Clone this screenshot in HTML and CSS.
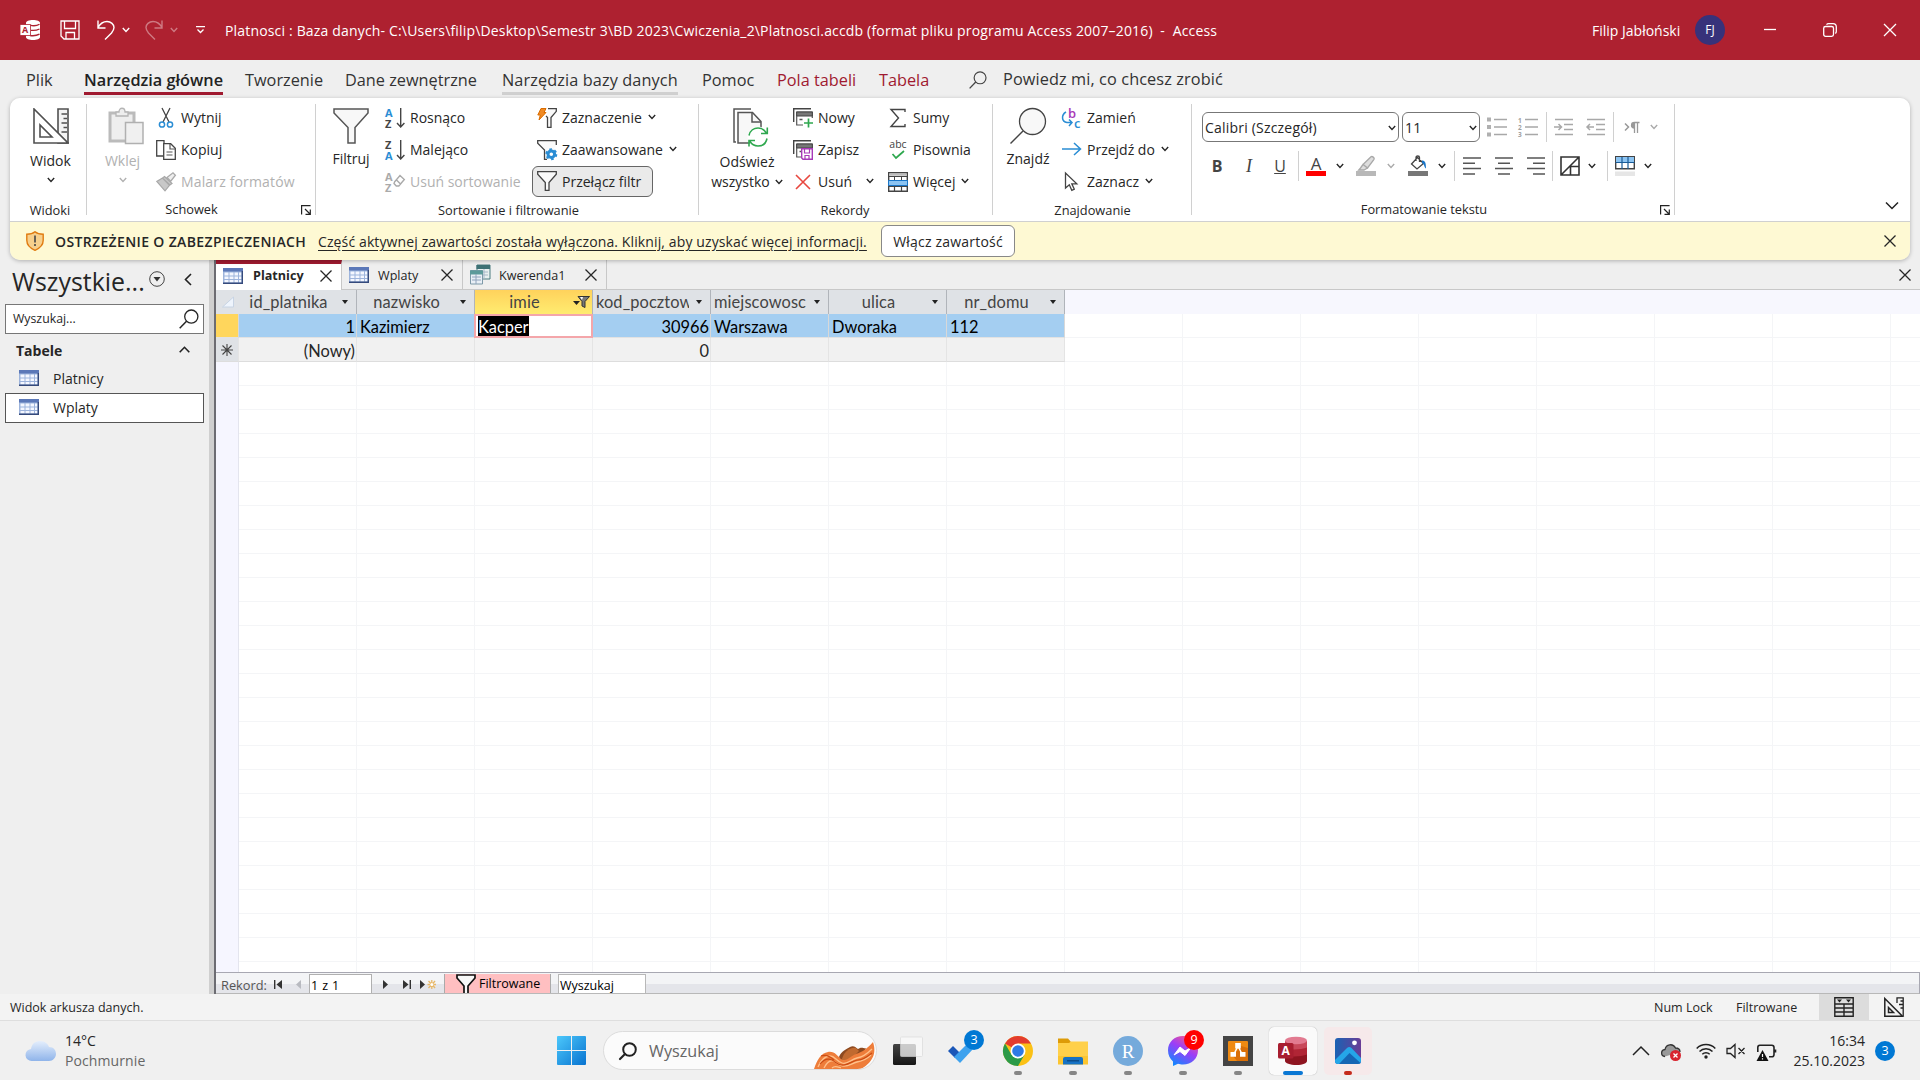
FILE: index.html
```html
<!DOCTYPE html>
<html lang="pl">
<head>
<meta charset="utf-8">
<title>Platnosci - Access</title>
<link rel="stylesheet" href="styles.css">
</head>
<body>
<svg class="defs" aria-hidden="true">
  <symbol id="chev" viewBox="0 0 8 6"><path d="M.8 1 4 4.400 7.200 1" fill="none" stroke="currentColor" stroke-width="1.400"/></symbol>
  <symbol id="x" viewBox="0 0 12 12"><path d="M.500.500l11 11M11.500.500l-11 11" fill="none" stroke="currentColor" stroke-width="1.300"/></symbol>
  <symbol id="mag" viewBox="0 0 20 20"><path d="M.700 19.300 7.500 12.300" fill="none" stroke="currentColor" stroke-width="1.500"/><circle cx="12.300" cy="7.600" r="6.600" fill="none" stroke="currentColor" stroke-width="1.300"/></symbol>
  <symbol id="funnel" viewBox="0 0 36 36"><path d="M1 1h34v4L22 19.500V35h-7V19.500L1 5z" fill="#f8f8f8" stroke="#555" stroke-width="1.500"/></symbol>
  <symbol id="funnel-s" viewBox="0 0 20 20"><path d="M.700.700h18.600v2.600L12 11.500v7.800H8.300v-7.800L.700 3.300z" fill="#fafafa" stroke="#444" stroke-width="1.300"/></symbol>
  <symbol id="sheet" viewBox="0 0 20 16"><path d="M0 0h20v16H0z" fill="#9db4dc"/><path d="M0 0h20v3.500H0z" fill="#5b78b8"/><path d="M1.500 4.500h4v3h-4zM6.500 4.500h4v3h-4zM11.500 4.500h3.500v3h-3.500zM16 4.500h2.500v3H16zM1.500 8.500h4v2.500h-4zM6.500 8.500h4v2.500h-4zM11.500 8.500h3.500v2.500h-3.500zM16 8.500h2.500v2.500H16zM1.500 12h4v2.500h-4zM6.500 12h4v2.500h-4zM11.500 12h3.500v2.500h-3.500zM16 12h2.500v2.500H16z" fill="#f4f7ff"/><path d="M0 15.300h19.300V3" fill="none" stroke="#354a7c" stroke-width="1.400"/></symbol>
  <symbol id="ruler" viewBox="0 0 36 36"><path d="M25 1h10v34H25z" fill="#f4f4f4" stroke="#505050" stroke-width="1.600"/><path d="M28.500 6H34M30.500 10.500H34M28.500 15H34M30.500 19.500H34M28.500 24H34" stroke="#505050" stroke-width="1.300"/><path d="M1 1v34h34z" fill="#fff" stroke="#505050" stroke-width="1.600"/><path d="M7 17v12h12z" fill="#fff" stroke="#505050" stroke-width="1.600"/></symbol>
  <symbol id="launch" viewBox="0 0 10 10"><path d="M.600 9.500V.600h9M4 4l5 5M9.300 4.500v4.800H4.500" fill="none" stroke="#222" stroke-width="1.200"/></symbol>
  <symbol id="rec" viewBox="0 0 20 20"><path d="M.700 14V.700H18" fill="none" stroke="#444" stroke-width="1.400"/><path d="M3.700 17V4h15.600v13z" fill="#fff" stroke="#555" stroke-width="1.200"/><path d="M3.700 4h15.600v4H3.700z" fill="#777" stroke="#444"/><path d="M6.500 11.500h3M11.500 11.500h3" stroke="#555" stroke-width="1.400"/></symbol>
  <symbol id="arr-down" viewBox="0 0 9 20"><path d="M4.700 0v19M1 15l3.700 4 3.700-4" fill="none" stroke="#444" stroke-width="1.400"/></symbol>
</svg>

<header class="titlebar">
  <svg class="i20" viewBox="0 0 20 20"><path d="M6 3c0-1.800 3-3 7-3s7 1.200 7 3v14c0 1.800-3 3-7 3s-7-1.200-7-3z" fill="#fff"/><path d="M10 5.200c3 .8 7 .5 9.500-1M11 10.300c3 .4 6 0 8.500-1.300M10 15.500c4 .6 7 0 9.500-1.300" fill="none" stroke="#ae2130" stroke-width="1.300"/><path d="M0 4.500h10.500v11H0z" fill="#fff" stroke="#ae2130" stroke-width=".8"/><text x="5.200" y="13.400" class="ic-a" fill="#ae2130" text-anchor="middle">A</text></svg>
  <svg class="i20" viewBox="0 0 20 20"><path d="M1 1h18v18H4l-3-3zM4.500 1v7.500h11V1M6 19v-6.500h8.500V19" fill="none" stroke="#fff" stroke-width="1.300"/></svg>
  <svg class="i20" viewBox="0 0 20 20"><path d="M2 .500V8h7.500M2 7.500C4 4 7 1.500 11 1.500c4 0 7 3 7 6 0 2-1 3.500-2.500 5.500L9 19.500" fill="none" stroke="#fff" stroke-width="1.400"/></svg>
  <svg class="chev"><use href="#chev"/></svg>
  <svg class="i20 faded" viewBox="0 0 20 20"><path d="M18 .500V8h-7.500M18 7.500C16 4 13 1.500 9 1.500c-4 0-7 3-7 6 0 2 1 3.500 2.500 5.500L11 19.500" fill="none" stroke="#fff" stroke-width="1.400"/></svg>
  <svg class="chev faded"><use href="#chev"/></svg>
  <svg class="custom" viewBox="0 0 9 8"><path d="M0 .700h9M1.500 3.500l3 3 3-3" fill="none" stroke="#fff" stroke-width="1.300"/></svg>
  <span class="title">Platnosci : Baza danych- C:\Users\filip\Desktop\Semestr 3\BD 2023\Cwiczenia_2\Platnosci.accdb (format pliku programu Access 2007–2016)&nbsp; -&nbsp; Access</span>
  <span class="user">Filip Jabłoński</span>
  <span class="avatar">FJ</span>
  <svg class="win" viewBox="0 0 14 14"><path d="M0 6.500h12" stroke="#fff" stroke-width="1.300"/></svg>
  <svg class="win" viewBox="0 0 14 14"><rect x=".700" y="3.500" width="9.800" height="9.800" rx="1.800" fill="none" stroke="#fff" stroke-width="1.300"/><path d="M3.500 1.600C4 1 4.500.700 5.500.700h4.500a3.300 3.300 0 0 1 3.300 3.300v4.500c0 .8-.3 1.500-1 2" fill="none" stroke="#fff" stroke-width="1.300"/></svg>
  <svg class="win" viewBox="0 0 14 14"><path d="M1 1l12 12M13 1 1 13" stroke="#fff" stroke-width="1.300"/></svg>
</header>

<nav class="tabs">
  <span>Plik</span><span class="on">Narzędzia główne</span><span>Tworzenie</span><span>Dane zewnętrzne</span><span class="hover">Narzędzia bazy danych</span><span>Pomoc</span><span class="ctx">Pola tabeli</span><span class="ctx">Tabela</span>
  <svg class="tellicon"><use href="#mag"/></svg><span class="tell">Powiedz mi, co chcesz zrobić</span>
</nav>

<section class="ribbonbox">
<div class="ribbon">
  <div class="group g-views">
    <div class="body"><div class="big"><svg class="i36"><use href="#ruler"/></svg><span>Widok</span><svg class="chev"><use href="#chev"/></svg></div></div>
    <div class="label">Widoki</div>
  </div>

  <div class="group g-clip">
    <div class="body">
      <div class="big dis"><svg class="i36" viewBox="0 0 36 36"><path d="M2 5h24v28H2z" fill="#eee" stroke="#bbb" stroke-width="3"/><path d="M8 8V4h3c0-5 6-5 6 0h3v4z" fill="#eee" stroke="#b5b5b5" stroke-width="1.300"/><path d="M17.500 14.500H35v21H17.500z" fill="#f0f0f0" stroke="#b0b0b0" stroke-width="1.500"/></svg><span>Wklej</span><svg class="chev"><use href="#chev"/></svg></div>
      <div class="col">
        <div class="cmd"><svg class="i20" viewBox="0 0 20 20"><path d="M6 0l7 14M14 0 7 14" stroke="#444" stroke-width="1.300"/><circle cx="6" cy="16.500" r="2.600" fill="none" stroke="#2a8dd4" stroke-width="1.500"/><circle cx="14" cy="16.500" r="2.600" fill="none" stroke="#2a8dd4" stroke-width="1.500"/></svg><span>Wytnij</span></div>
        <div class="cmd"><svg class="i20" viewBox="0 0 20 20"><path d="M8 3V.700H.700V16H7" fill="none" stroke="#444" stroke-width="1.300"/><path d="M7.700 3.700h7l4.600 4.600v11H7.700z" fill="#fff" stroke="#444" stroke-width="1.300"/><path d="M14 4v5h5M10.500 12h6M10.500 15h6" fill="none" stroke="#555" stroke-width="1.200"/></svg><span>Kopiuj</span></div>
        <div class="cmd dis"><svg class="i20" viewBox="0 0 20 20"><path d="M11 5.500 17 .800l2.400 2.400-4.700 6z" fill="#eee" stroke="#aaa" stroke-width="1.300"/><path d="M8.500 4.500l7.500 7-2 1.500-7.500-7zM6.500 6 .800 9.500 9 18.800l4.500-5.500z" fill="#c8c8c8" stroke="#a8a8a8" stroke-width="1.200"/></svg><span class="wide">Malarz formatów</span></div>
      </div>
    </div>
    <div class="label">Schowek</div><svg class="launch"><use href="#launch"/></svg>
  </div>

  <div class="group g-sort">
    <div class="body">
      <div class="big up"><svg class="i36"><use href="#funnel"/></svg><span>Filtruj</span></div>
      <div class="col c1">
        <div class="cmd"><svg class="i20" viewBox="0 0 20 20"><text x="0" y="8.500" class="az" fill="#2a8dd4">A</text><text x="0" y="19.500" class="az" fill="#444">Z</text><use href="#arr-down" x="11" width="9" height="20"/></svg><span>Rosnąco</span></div>
        <div class="cmd"><svg class="i20" viewBox="0 0 20 20"><text x="0" y="8.500" class="az" fill="#444">Z</text><text x="0" y="19.500" class="az" fill="#2a8dd4">A</text><use href="#arr-down" x="11" width="9" height="20"/></svg><span>Malejąco</span></div>
        <div class="cmd dis"><svg class="i20" viewBox="0 0 20 20"><text x="0" y="8.500" class="az" fill="#aaa">A</text><text x="0" y="19.500" class="az" fill="#aaa">Z</text><path d="M9.500 10 15 3.500l4.300 4L13.800 14h-2.500L9 11.500zM11.500 8l4 4" fill="none" stroke="#aaa" stroke-width="1.400"/></svg><span>Usuń sortowanie</span></div>
      </div>
      <div class="col c2">
        <div class="cmd"><svg class="i20" viewBox="0 0 20 20"><path d="M11 .700h8.300v2.600L14 9.500v9.800h-3.500V9.500L9 8" fill="#fafafa" stroke="#444" stroke-width="1.300"/><path d="M4 .500h5L7 4.500h2L2 12l1.300-5H.800z" fill="#f08a24" stroke="#d96c00"/></svg><span>Zaznaczenie</span><svg class="chev"><use href="#chev"/></svg></div>
        <div class="cmd"><svg class="i20" viewBox="0 0 20 20"><path d="M19.300 5V.700H.700v2.600L7.500 10v9.300H10" fill="#fafafa" stroke="#444" stroke-width="1.300"/><circle cx="14.300" cy="14.200" r="3.300" fill="#fff" stroke="#2a8dd4" stroke-width="3"/><circle cx="14.300" cy="14.200" r="5" fill="none" stroke="#2a8dd4" stroke-width="2" stroke-dasharray="2.600 2.636"/></svg><span>Zaawansowane</span><svg class="chev"><use href="#chev"/></svg></div>
        <div class="cmd toggled"><svg class="i20"><use href="#funnel-s"/></svg><span>Przełącz filtr</span></div>
      </div>
    </div>
    <div class="label">Sortowanie i filtrowanie</div>
  </div>

  <div class="group g-rec">
    <div class="body">
      <div class="big refresh"><svg viewBox="0 0 36 39"><path d="M18 1H1v33h2" fill="none" stroke="#555" stroke-width="1.500"/><path d="M5 4.500h14.500l8.500 9V35H5z" fill="#f8f8f8" stroke="#555" stroke-width="1.500"/><path d="M19 5v9h9" fill="none" stroke="#555" stroke-width="1.500"/><circle cx="25" cy="29" r="10.500" fill="#fff"/><path d="M16 27.500c1-5 5-7.500 9-7.500 3.500 0 6.500 2 8.300 5M34.300 19.500v6H28M34 30.500c-1 5-4.500 7.500-9 7.500-3.500 0-6.500-2-8.300-5M16 38.500v-6h6" fill="none" stroke="#2fa84f" stroke-width="1.600"/></svg><span>Odśwież</span><span class="l2">wszystko <svg class="chev"><use href="#chev"/></svg></span></div>
      <div class="col c1">
        <div class="cmd"><svg class="i20" viewBox="0 0 20 20"><use href="#rec" width="20" height="20"/><path d="M10 10h10v10H10z" fill="#fff"/><path d="M15.500 10.500v9M11 15h9" stroke="#2fa84f" stroke-width="1.700"/></svg><span>Nowy</span></div>
        <div class="cmd"><svg class="i20" viewBox="0 0 20 20"><use href="#rec" width="20" height="20"/><path d="M8.700 8.700h10.600v10.600H10L8.700 18z" fill="#fff" stroke="#a839b8" stroke-width="1.400"/><path d="M11.500 9v4h5V9M12 19v-3.500h4V19" fill="none" stroke="#a839b8" stroke-width="1.200"/></svg><span>Zapisz</span></div>
        <div class="cmd"><svg class="i20" viewBox="0 0 20 20"><path d="M3 3l14 14M17 3 3 17" stroke="#e8483f" stroke-width="1.600"/></svg><span>Usuń</span><svg class="chev far"><use href="#chev"/></svg></div>
      </div>
      <div class="col c2">
        <div class="cmd"><svg class="i20" viewBox="0 0 20 20"><path d="M17 4V1.500H3l7.500 8.500L3 18.500h14V16" fill="none" stroke="#444" stroke-width="1.400"/></svg><span>Sumy</span></div>
        <div class="cmd"><svg class="i20" viewBox="0 0 20 20"><text x="10" y="8" class="abc" text-anchor="middle" fill="#444">abc</text><path d="M4.500 14l3.500 4 8-7" fill="none" stroke="#2fa84f" stroke-width="1.700"/></svg><span>Pisownia</span></div>
        <div class="cmd"><svg class="i20" viewBox="0 0 20 20"><path d="M.700.700h18.600v18.600H.700z" fill="#fff" stroke="#444" stroke-width="1.400"/><path d="M1.300 1.300h17.400v2.500H1.300z" fill="#bbb"/><path d="M0 4.500h20M0 14.500h20M6.500 14v6M13.500 14v6" stroke="#444" stroke-width="1.200"/><path d="M.500 8.500h19v5H.500z" fill="#8cc4f2" stroke="#1a76c8"/><path d="M6.500 4.500V8M13.500 4.500V8" stroke="#444"/></svg><span>Więcej</span><svg class="chev"><use href="#chev"/></svg></div>
      </div>
    </div>
    <div class="label">Rekordy</div>
  </div>

  <div class="group g-find">
    <div class="body">
      <div class="big up"><svg class="i36" viewBox="0 0 36 36"><path d="M.500 35.500 13 23" stroke="#444" stroke-width="1.500"/><circle cx="22.500" cy="13.500" r="13" fill="#f8f8f8" stroke="#444" stroke-width="1.300"/></svg><span>Znajdź</span></div>
      <div class="col">
        <div class="cmd"><svg class="i20" viewBox="0 0 20 20"><text x="6" y="9.500" class="bc" fill="#a839b8">b</text><text x="12" y="19.500" class="bc" fill="#2a8dd4">c</text><path d="M4 4C-1 7-.500 14 5 14.500h5M7 11.500l3 3-3 3.500" fill="none" stroke="#2a8dd4" stroke-width="1.500"/></svg><span>Zamień</span></div>
        <div class="cmd"><svg class="i20" viewBox="0 0 20 20"><path d="M0 9h18M12 3l6.500 6-6.500 6" fill="none" stroke="#2a8dd4" stroke-width="1.500"/></svg><span>Przejdź do</span><svg class="chev"><use href="#chev"/></svg></div>
        <div class="cmd"><svg class="i20" viewBox="0 0 20 20"><path d="M3.500 1v15l3.800-3.300 2.500 5.600 2.500-1.200-2.500-5.300h5z" fill="#fff" stroke="#444" stroke-width="1.300"/></svg><span>Zaznacz</span><svg class="chev"><use href="#chev"/></svg></div>
      </div>
    </div>
    <div class="label">Znajdowanie</div>
  </div>

  <div class="group g-fmt">
    <div class="fmt">
      <div class="frow r1">
        <span class="combo">Calibri (Szczegół)<svg class="chev"><use href="#chev"/></svg></span>
        <span class="combo c11">11<svg class="chev"><use href="#chev"/></svg></span>
        <svg class="i20" viewBox="0 0 20 20"><path d="M0 .500h4v4H0zM0 8h4v4H0zM0 15.500h4v4H0z" fill="#b0b0b0"/><path d="M7 2.500h13M7 10h13M7 17.500h13" stroke="#a8a8a8" stroke-width="1.500"/></svg>
        <svg class="i20" viewBox="0 0 20 20"><g class="nums" fill="#a0a0a0"><text x="0" y="5.500">1</text><text x="0" y="12.800">2</text><text x="0" y="19.800">3</text></g><path d="M7 2.500h13M7 10h13M7 17.500h13" stroke="#a8a8a8" stroke-width="1.500"/></svg>
        <i class="sep"></i>
        <svg class="i20" viewBox="0 0 20 20"><path d="M1 2.500h18M10 7.500h9M10 12.500h9M1 17.500h18M0 10h7M4.500 7l3 3-3 3" fill="none" stroke="#a8a8a8" stroke-width="1.500"/></svg>
        <svg class="i20" viewBox="0 0 20 20"><path d="M1 2.500h18M10 7.500h9M10 12.500h9M1 17.500h18M1 10h7M4 7l-3 3 3 3" fill="none" stroke="#a8a8a8" stroke-width="1.500"/></svg>
        <i class="sep"></i>
        <svg class="i20" viewBox="0 0 20 20"><path d="M3 6.500l3.500 3.500L3 13.500" fill="none" stroke="#999" stroke-width="1.500"/><path d="M17.500 5.500h-5c-4 0-4 5.500 0 5.500M12.500 5.500V16M15.500 5.500V16" fill="none" stroke="#999" stroke-width="1.300"/><path d="M12.500 5.500c-4 0-4 5.500 0 5.500z" fill="#999"/></svg>
        <svg class="chev pale"><use href="#chev"/></svg>
      </div>
      <div class="frow r2">
        <b>B</b><em>I</em><u>U</u><i class="sep"></i>
        <svg class="i20" viewBox="0 0 20 20"><text x="10" y="13.500" class="fa" text-anchor="middle" fill="#444">A</text><path d="M0 15h20v5H0z" fill="red"/></svg>
        <svg class="chev"><use href="#chev"/></svg>
        <svg class="i20" viewBox="0 0 20 20"><path d="M7 8.500 15 .800c1-1 4 1 3 2.500L11.500 12zM7 8.500 4.500 12l-1.800 2H8l3.500-2z" fill="#ddd" stroke="#a8a8a8" stroke-width="1.300"/><path d="M0 15h20v5H0z" fill="#b8b8b8"/></svg>
        <svg class="chev pale"><use href="#chev"/></svg>
        <svg class="i20" viewBox="0 0 20 20"><path d="M9.500 1.500 3.500 8l5.500 5 6.500-5.500zM8 5V1.500c0-2 3.500-2 3.500 0V6" fill="#fff" stroke="#444" stroke-width="1.300"/><path d="M14 4.500c3 0 4 2 4 8-2-1-1.500-5-4-5.500z" fill="#1a76c8"/><path d="M0 15h20v5H0z" fill="#777"/></svg>
        <svg class="chev"><use href="#chev"/></svg><i class="sep"></i>
        <svg class="i20" viewBox="0 0 20 20"><path d="M1 2h18M1 7.300h12M1 12.600h18M1 18h12" stroke="#555" stroke-width="1.500"/></svg>
        <svg class="i20" viewBox="0 0 20 20"><path d="M1 2h18M4 7.300h12M1 12.600h18M4 18h12" stroke="#555" stroke-width="1.500"/></svg>
        <svg class="i20" viewBox="0 0 20 20"><path d="M1 2h18M7 7.300h12M1 12.600h18M7 18h12" stroke="#555" stroke-width="1.500"/></svg>
        <i class="sep"></i>
        <svg class="i20" viewBox="0 0 20 20"><path d="M1 1h18v18H1zM1 19 19 1M10.500 10.500V19M10.500 10.500H19" fill="none" stroke="#333" stroke-width="1.600"/></svg>
        <svg class="chev"><use href="#chev"/></svg><i class="sep"></i>
        <svg class="i20" viewBox="0 0 20 20"><path d="M.700.700h18.600v12H.700z" fill="#fff" stroke="#444" stroke-width="1.400"/><path d="M1 1h18v5.500H1z" fill="#8cc4f2"/><path d="M7 1v12M13 1v12M.500 6.500h19" stroke="#1a5c98" stroke-width="1.200"/><path d="M0 15.500h20V20H0z" fill="#e6e6e6"/></svg>
        <svg class="chev"><use href="#chev"/></svg>
      </div>
    </div>
    <div class="label">Formatowanie tekstu</div><svg class="launch"><use href="#launch"/></svg>
  </div>
  <svg class="collapse" viewBox="0 0 14 9"><path d="M1 1.500l6 6 6-6" fill="none" stroke="#222" stroke-width="1.500"/></svg>
</div>
<div class="warn">
  <svg class="shield" viewBox="0 0 18 20"><path d="M9 .700C11 2.500 14 3.300 17.200 3.300v6c0 5-3.500 8-8.200 10-4.700-2-8.200-5-8.200-10v-6C4 3.300 7 2.500 9 .700z" fill="#f7d08c" stroke="#e07b10" stroke-width="1.400"/><path d="M9 4.500v7M9 13v2" stroke="#444" stroke-width="1.600"/></svg>
  <b>OSTRZEŻENIE O ZABEZPIECZENIACH</b>
  <a>Część aktywnej zawartości została wyłączona. Kliknij, aby uzyskać więcej informacji.</a>
  <span class="enable">Włącz zawartość</span>
  <svg class="x12"><use href="#x"/></svg>
</div>
</section>

<main class="work">
  <aside class="nav">
    <div class="navhead"><span class="all">Wszystkie...</span><svg class="drop" viewBox="0 0 16 16"><circle cx="8" cy="8" r="7.300" fill="none" stroke="#444"/><path d="M4.500 6h7L8 10.500z" fill="#333"/></svg><svg class="left" viewBox="0 0 8 13"><path d="M7 1 1.500 6.500 7 12" fill="none" stroke="#222" stroke-width="1.600"/></svg></div>
    <div class="search"><span>Wyszukaj...</span><svg><use href="#mag"/></svg></div>
    <div class="sect"><b>Tabele</b><svg viewBox="0 0 11 7"><path d="M.700 6.300 5.500 1.300l4.800 5" fill="none" stroke="#222" stroke-width="1.600"/></svg></div>
    <div class="item"><svg><use href="#sheet"/></svg>Platnicy</div>
    <div class="item sel"><svg><use href="#sheet"/></svg>Wplaty</div>
  </aside>
  <section class="doc">
    <div class="doctabs">
      <div class="dt on"><svg class="sh"><use href="#sheet"/></svg><b>Platnicy</b><svg class="x12"><use href="#x"/></svg></div>
      <div class="dt t2"><svg class="sh"><use href="#sheet"/></svg><span>Wplaty</span><svg class="x12"><use href="#x"/></svg></div>
      <div class="dt t3"><svg class="q" viewBox="0 0 20 20"><path d="M7 0h13v14H7z" fill="#e8f0f0" stroke="#4d7d80"/><path d="M6.500 0H20v4H6.500z" fill="#3d7175"/><path d="M10 7h8M10 10h8M14 4v10" stroke="#a8b8c8"/><path d="M.500 5.500h12V19H.500z" fill="#e9eff6" stroke="#7d99a8"/><path d="M0 5.500h13v4H0z" fill="#5c9a9a"/><path d="M2 12h9M2 15h9M6 9v10" stroke="#90a4bc"/></svg><span>Kwerenda1</span><svg class="x12"><use href="#x"/></svg></div>
      <svg class="x12 closeall"><use href="#x"/></svg>
    </div>
    <div class="sheet">
      <div class="row head">
        <div class="sel"><svg viewBox="0 0 12 11"><path d="M11.500.500v10H.500z" fill="#eef4fc" stroke="#c8d4e4"/></svg></div>
        <div><span>id_platnika</span><i></i></div><div><span>nazwisko</span><i></i></div><div class="act"><span>imie</span><svg viewBox="0 0 17 12"><path d="M0 5h7L3.500 9z" fill="#222"/><path d="M5 .500h11.500l-4.500 5v6L9 10V5.500z" fill="#777" stroke="#333"/><path d="M7 1h3l-1 3z" fill="#fff"/></svg></div><div><span>kod_pocztowy</span><i></i></div><div><span>miejscowosc</span><i></i></div><div><span>ulica</span><i></i></div><div><span>nr_domu</span><i></i></div>
      </div>
      <div class="row data">
        <div class="sel"></div><div class="num">1</div><div>Kazimierz</div><div class="edit"><mark>Kacper</mark></div><div class="num">30966</div><div>Warszawa</div><div>Dworaka</div><div>112</div>
      </div>
      <div class="row new">
        <div class="sel"><svg viewBox="0 0 12 12"><path d="M6 0v12M0 6h12M1.500 1.500l9 9M10.500 1.500l-9 9" stroke="#444" stroke-width="1.100"/></svg></div><div class="num">(Nowy)</div><div></div><div></div><div class="num">0</div><div></div><div></div><div></div>
      </div>
    </div>
    <div class="recbar">
      <span class="rl">Rekord:</span>
      <svg viewBox="0 0 8 9"><path d="M.700 0v9" stroke="#333" stroke-width="1.400"/><path d="M8 0v9L2.500 4.500z" fill="#333"/></svg>
      <svg viewBox="0 0 8 9"><path d="M6 0v9L1 4.500z" fill="#b8bac0"/></svg>
      <span class="pos">1 z 1</span>
      <svg viewBox="0 0 8 9"><path d="M0 0v9l5-4.500z" fill="#333"/></svg>
      <svg viewBox="0 0 8 9"><path d="M0 0v9l5.500-4.500z" fill="#333"/><path d="M7.300 0v9" stroke="#333" stroke-width="1.400"/></svg>
      <svg class="nw" viewBox="0 0 16 9"><path d="M0 0v9l5-4.500z" fill="#333"/><path d="M11.800 0v9M7.500 4.500h8.500M8.500 1l6.600 7M15.100 1l-6.600 7" stroke="#e8b868" stroke-width="1.300"/><circle cx="11.800" cy="4.500" r="1.500" fill="#fff"/></svg>
      <span class="filt"><svg viewBox="0 0 20 20"><path d="M1 1h18v3l-7 8v9H8v-9L1 4z" fill="#f8f8f8" stroke="#111" stroke-width="1.700"/></svg>Filtrowane</span>
      <span class="find">Wyszukaj</span>
    </div>
  </section>
</main>

<footer class="status">
  <span class="msg">Widok arkusza danych.</span><span class="nl">Num Lock</span><span class="fl">Filtrowane</span>
  <span class="view"><svg class="i20" viewBox="0 0 20 20"><path d="M.800.800h18.400v18.400H.800zM1 7h18M1 11h18M1 15h18M10 7v12" fill="none" stroke="#222" stroke-width="1.400"/><path d="M3 2.500h5L5.500 5.500zM12 2.500h5l-2.500 3z" fill="#222"/></svg></span>
  <svg class="i20" viewBox="0 0 20 20"><path d="M13 6V.800h6.200V19M16.500 4H19M15 7.500h4M16.500 11H19" fill="none" stroke="#222" stroke-width="1.300"/><path d="M.800 1.500v17.700h17.700zM4.500 10.500v5h5z" fill="none" stroke="#222" stroke-width="1.500"/></svg>
</footer>

<footer class="taskbar">
  <svg class="weather" viewBox="0 0 32 22"><defs><linearGradient id="cl" x2="0" y2="1"><stop stop-color="#e4eefc"/><stop offset="1" stop-color="#8fb4ea"/></linearGradient></defs><path d="M7 21a6 6 0 0 1-1-12C7 3 11 1 15 1c5 0 8 3 9 6 5 0 7 3.500 7 7s-3 7-7 7z" fill="url(#cl)"/></svg>
  <div class="wtext"><span>14°C</span><span class="dim">Pochmurnie</span></div>
  <svg class="start" viewBox="0 0 29 29"><defs><linearGradient id="wn" x2="1" y2="1"><stop stop-color="#4cc8fb"/><stop offset="1" stop-color="#0873d0"/></linearGradient></defs><path d="M0 1a1 1 0 0 1 1-1h13v14H0zM15 0h13a1 1 0 0 1 1 1v13H15zM0 15h14v14H1a1 1 0 0 1-1-1zM15 15h14v13a1 1 0 0 1-1 1H15z" fill="url(#wn)"/></svg>
  <div class="pill"><svg class="pm" viewBox="0 0 18 18"><circle cx="10.500" cy="7.500" r="6.300" fill="none" stroke="#222" stroke-width="2"/><path d="M6 12 1 17" stroke="#222" stroke-width="2.200" stroke-linecap="round"/></svg><span>Wyszukaj</span>
    <svg class="art" viewBox="0 0 61 27"><path d="M25 15c2-6 8-8 11-10 4-2 6 1 8 2 4-3 6 0 8-1l-4 9-22 3z" fill="#8d4a20"/><path d="M30 12c4-5 8-7 12-6l3 3-9 9-9 1z" fill="#c06a30"/><path d="M0 27C3 18 7 11 14 10c7-1 9 4 14 8 5 1 9-4 14-6 6-2 11-5 17-12 3 9 2 19-12 27z" fill="#ee7d3a"/><path d="M4 25c3-7 7-11 12-11s6 5 12 7 9-4 15-5 10-4 15-9M10 26c3-6 6-8 9-7s5 4 10 5 9-3 14-4 9-2 14-7M18 26c3-3 6-1 9 0" fill="none" stroke="#ffc08a" stroke-width="1.300"/><path d="M6 22c4-5 8-6 12-4s6 6 12 5 10-5 14-5 9-3 14-7M7 14c5-2 9 0 13 4" fill="none" stroke="#cc4d14" stroke-width="1.200"/></svg></div>
  <div class="apps">
    <div class="app"><svg viewBox="0 0 30 30"><defs><linearGradient id="tv" x2="0" y2="1"><stop stop-color="#444"/><stop offset="1" stop-color="#161616"/></linearGradient></defs><rect x="0" y="8" width="23" height="21" rx="1.500" fill="url(#tv)"/><rect x="7.500" y="1" width="22" height="19.500" rx="1" fill="#fafafa" stroke="#ddd" opacity=".75"/></svg></div>
    <div class="app"><svg viewBox="0 0 30 30"><path d="M0 15l5-5 7 7-5 5z" fill="#1b57b8"/><path d="M6 21 20 7l6 5-14 15z" fill="#3ea2ee"/></svg><span class="badge">3</span></div>
    <div class="app run"><svg viewBox="0 0 30 30"><circle cx="15" cy="15" r="15" fill="#fbc116"/><path d="M15 15 2 7.500A15 15 0 0 1 28 7.500H15z" fill="#e33b2e"/><path d="M2 7.500A15 15 0 0 0 15 30l6.500-11.300L15 22 8.500 18.800z" fill="#2b9a48"/><circle cx="15" cy="15" r="7.500" fill="#fff"/><circle cx="15" cy="15" r="5.800" fill="#2f7ae5"/></svg></div>
    <div class="app run"><svg viewBox="0 0 30 30"><path d="M0 2.500h10l3 3.500v4H0z" fill="#dd9b08"/><path d="M0 7h11l2-1.500h17V28H0z" fill="#ffd04a"/><path d="M0 20h30v8.500H0z" fill="#fcc530"/><path d="M5 28.500V23a2 2 0 0 1 2-2h16a2 2 0 0 1 2 2v5.500z" fill="#1672c4"/><path d="M9 24.800h12" stroke="#0b447e" stroke-width="1.200"/></svg></div>
    <div class="app run"><svg viewBox="0 0 30 30"><circle cx="15" cy="15" r="15" fill="#75aadb"/><text x="15" y="21.500" class="rr" text-anchor="middle" fill="#fff">R</text></svg></div>
    <div class="app run"><svg viewBox="0 0 30 30"><defs><linearGradient id="ms" x1=".2" y1="1" x2=".8" y2="0"><stop stop-color="#0a8cff"/><stop offset=".55" stop-color="#9b3df8"/><stop offset="1" stop-color="#ff5a80"/></linearGradient></defs><path d="M15 0c8.500 0 15 6 15 14.300S23.500 28.500 15 28.500c-2 0-3.500-.2-5-.7L5 30v-4.500C2 23 0 19 0 14.300 0 6 6.500 0 15 0z" fill="url(#ms)"/><path d="M6 19l6-8 5 4 6-3.500-6 8-5-4z" fill="#fff" stroke="#fff"/></svg><span class="badge red">9</span></div>
    <div class="app run"><svg viewBox="0 0 30 30"><path d="M0 0h30v30H0z" fill="#444"/><rect x="5" y="5" width="20" height="20" rx="1" fill="#ef8a12"/><path d="M25 12v13H14l-4-5 8-10z" fill="#d96f08"/><path d="M15 10 10.500 19M15 10l4.500 9" stroke="#fff" stroke-width="1.500"/><path d="M12.200 7h5.600v5.500h-5.600zM7.500 16h5.500v4.800H7.500zM17 16h5.500v4.800H17z" fill="#fff"/></svg></div>
    <div class="app run active"><svg viewBox="0 0 30 30"><path d="M7 5v20c0 2 5 4 11.500 4S29 27 29 25V5z" fill="#8e1420"/><path d="M7 5v14c3 2 16 2 22-.500V5z" fill="#b02535"/><path d="M7 5v7c3 2 16 2 22-.500V5z" fill="#c8485a"/><ellipse cx="18" cy="4.500" rx="11" ry="3.800" fill="#e27a90"/><rect y="7" width="15.500" height="15.500" rx="1.500" fill="#a81e30"/><text x="7.700" y="19" class="aa" text-anchor="middle" fill="#fff">A</text></svg></div>
    <div class="app run attn"><svg viewBox="0 0 30 30"><defs><linearGradient id="ph" x2="1"><stop stop-color="#1a62b4"/><stop offset="1" stop-color="#6a3c96"/></linearGradient></defs><rect x="2" y="2" width="26" height="26" rx="3" fill="url(#ph)"/><path d="M2 24 14 12c1.500-1.500 3-1.500 4.500 0L28 22v3a3 3 0 0 1-3 3H5a3 3 0 0 1-3-3z" fill="#25a6e8"/><path d="M6 28 16.500 17 27.500 27l-2.500 1z" fill="#1566b4"/><circle cx="21.500" cy="6.800" r="2.400" fill="#fff"/></svg></div>
  </div>
  <div class="tray">
    <svg viewBox="0 0 20 20"><path d="M2 14l8-8 8 8" fill="none" stroke="#222" stroke-width="1.500"/></svg>
    <svg viewBox="0 0 20 20"><path d="M4 15.500C-.500 15-.500 9 4 8.500 5 3 12 2 14.500 7c3 0 4.500 2 4.500 4" fill="#999" stroke="#333" stroke-width="1.300"/><circle cx="14.500" cy="14.500" r="5.500" fill="#d8242e"/><path d="M12.500 12.500l4 4M16.500 12.500l-4 4" stroke="#fff" stroke-width="1.300"/></svg>
    <svg viewBox="0 0 20 20"><path d="M.700 7.500a13 13 0 0 1 18.600 0M3.500 10.500a9 9 0 0 1 13 0M6.300 13.300a5.300 5.300 0 0 1 7.400 0" fill="none" stroke="#222" stroke-width="1.500"/><circle cx="10" cy="16" r="1.700" fill="#222"/></svg>
    <svg viewBox="0 0 20 20"><path d="M1 7.500h3.500L9 3.500v13L4.500 12.500H1zM12.500 7l6 6M18.500 7l-6 6" fill="none" stroke="#222" stroke-width="1.300"/></svg>
    <svg viewBox="0 0 20 20"><path d="M.800 11V6.500c0-1.500.5-2.300 2-2.300h12c1.500 0 2.200.8 2.200 2.300v7c0 1.500-.7 2.300-2.200 2.300H12M18.500 8.500v3" fill="none" stroke="#222" stroke-width="1.600"/><path d="M5.500 9 11.500 20H-.500z" fill="#111"/><path d="M5.500 13v3M5.500 17.300v1.300" stroke="#fff" stroke-width="1.200"/></svg>
  </div>
  <div class="clock"><span>16:34</span><span>25.10.2023</span></div>
  <span class="badge note">3</span>
</footer>
</body>
</html>
```
FILE: styles.css
```css
* { box-sizing: border-box; }
body { margin: 0; width: 1920px; height: 1080px; overflow: hidden; background: #efefef; color: #262626; font: 14px/20px "Open Sans", "Noto Sans", sans-serif; white-space: nowrap; }
svg { display: block; flex: none; overflow: visible; }
svg.defs { width: 0; height: 0; position: absolute; }
.i20 { width: 20px; height: 20px; }
.i36 { width: 36px; height: 36px; }
.chev { width: 8px; height: 6px; }
.x12 { width: 12px; height: 12px; }
.faded { opacity: .4; }
.pale { color: #aaa; }

/* title bar */
.titlebar { height: 60px; padding-left: 20px; background: #ae2130; color: #fff; display: grid; grid-template-columns: 40px 36px 26px 22px 26px 26px 29px 1367px 103px 69px 59px 60px 37px; align-items: center; }
.titlebar .custom { width: 9px; height: 8px; }
.title { letter-spacing: .17px; padding-top: 1px; }
.user { padding-top: 1px; }
.avatar { width: 30px; height: 30px; border-radius: 50%; background: #37327a; font-size: 12px; line-height: 30px; text-align: center; }
.win { width: 14px; height: 14px; }
.ic-a { font: bold 9px "Open Sans", sans-serif; }

/* ribbon tabs */
.tabs { height: 38px; padding-left: 26px; display: grid; grid-template-columns: 58px 161px 100px 157px 200px 75px 102px 90px 34px 1fr; justify-items: start; font-size: 16.300px; line-height: 26px; padding-top: 7px; color: #333; }
.tabs span { height: 28px; }
.tabs .on { font-weight: 600; color: #222; border-bottom: 3px solid #a01a30; }
.tabs .hover { border-bottom: 3px solid #d0d0d0; letter-spacing: .1px; }
.tabs .ctx { color: #a01a30; }
.tabs .tell { letter-spacing: .1px; line-height: 25px; }
.tellicon { width: 18px; height: 18px; margin-top: 4px; color: #444; }

/* ribbon */
.ribbonbox { margin: 0 10px; width: 1900px; height: 162px; border-radius: 10px; overflow: hidden; box-shadow: 0 1px 4px #0004; position: relative; z-index: 1; }
.ribbon { height: 124px; display: flex; background: #fff; border-bottom: 1px solid #d0d0d0; }
.group { height: 123px; padding-top: 4px; position: relative; background: linear-gradient(#d0d0d0, #d0d0d0) no-repeat right 6px / 1px 111px; }
.body, .fmt { height: 96px; display: flex; }
.label { height: 23px; line-height: 24px; text-align: center; font-size: 12.800px; }
.g-clip .label, .g-fmt .label { line-height: 23px; }
.launch { width: 10px; height: 10px; position: absolute; right: 5px; bottom: 6px; }
.big { flex: none; display: flex; flex-direction: column; align-items: center; padding-top: 6px; }
.big span { margin-top: 7px; }
.big > .chev { margin-top: 6px; }
.big.up span { margin-top: 5px; }
.dis { color: #b1b1b1; }
.col { display: grid; grid-template-rows: repeat(3, 32px); align-content: start; }
.cmd { display: flex; align-items: center; }
.cmd > .i20 { margin-top: -1px; }
.cmd span { margin-left: 5px; }
.cmd .wide { letter-spacing: .15px; }
.cmd .chev { margin-left: 6px; margin-bottom: 3px; }
.cmd .chev.far { margin-left: 14px; }
.toggled { margin: 0 0 1px -5px; padding: 0 11px 0 4px; background: #eaeaea; border: 1px solid #666; border-radius: 6px; }
.g-views { width: 77px; } .g-views .big { width: 81px; } .g-views .label { padding-left: 3px; }
.g-clip { width: 229px; } .g-clip .big { width: 71px; } .g-clip .big .i36 { margin-left: 6px; } .g-clip .col { margin-left: -2px; } .g-clip .label { padding-right: 20px; }
.g-sort { width: 383px; } .g-sort .big { width: 70px; } .g-sort .c1 { width: 152px; margin-left: -1px; } .g-sort .label { padding-left: 2px; }
.g-rec { width: 294px; } .g-rec .big { width: 96px; } .g-rec .c1 { width: 95px; margin-left: -2px; } .g-rec .label { padding-right: 2px; }
.g-find { width: 199px; } .g-find .big { width: 70px; } .g-find .col { margin-left: -1px; }
.g-fmt { width: 483px; } .g-fmt .label { padding-right: 19px; }
.g-sort .c2 { justify-items: start; }
.refresh > svg:first-child { width: 36px; height: 39px; margin-left: 8px; }
.big.refresh span { margin-top: 5px; }
.big.refresh .l2 { margin-top: 0; display: flex; align-items: center; gap: 5px; }
.az { font: bold 11px "Open Sans", sans-serif; }
.abc { font: 10.500px "Open Sans", sans-serif; }
.bc { font: 600 13px "Open Sans", sans-serif; }
.nums { font: bold 6.500px "Open Sans", sans-serif; }
.fa { font: 17px "Open Sans", sans-serif; }
.fmt { flex-direction: column; padding: 10px 0 0 10px; gap: 9px; }
.frow { height: 30px; display: grid; align-items: center; }
.r1 { grid-template-columns: 200px 85px 31px 28px 8px 32px 27px 9px 28px 10px; }
.r2 { grid-template-columns: 32px 31px 24px 8px 30px 20px 31px 21px 30px 16px 8px 32px 32px 26px 8px 28px 19px 8px 29px 10px; padding-left: 9px; }
.r2 b, .r2 em, .r2 u { font-size: 16px; color: #444; width: 12px; text-align: center; }
.r2 em { font-family: "Liberation Serif", serif; font-size: 18px; }
.sep { width: 1px; height: 30px; background: #d0d0d0; }
.combo { width: 197px; height: 30px; border: 1px solid #777; border-radius: 6px; display: flex; align-items: center; justify-content: space-between; padding: 1px 2px 0 2px; letter-spacing: .2px; }
.c11 { width: 78px; }
.collapse { width: 14px; height: 9px; margin: 103px 0 0 210px; }

/* security message bar */
.warn { height: 38px; background: #fef9d3; padding-left: 16px; display: grid; grid-template-columns: 29px 263px 563px 1003px 20px; align-items: center; }
.shield { width: 18px; height: 20px; }
.warn b { font-weight: 600; letter-spacing: .36px; }
.warn a { text-decoration: underline; text-underline-offset: 3px; letter-spacing: .12px; }
.warn b, .warn a { padding-top: 1px; }
.enable { width: 134px; height: 32px; background: #fff; border: 1px solid #888; border-radius: 6px; text-align: center; line-height: 31px; letter-spacing: .2px; }

/* work area */
.work { height: 734px; display: flex; }
.nav { width: 216px; border-right: 2px solid #6c6c72; box-shadow: inset -5px 0 #cfcfcf; padding: 0 0 0 5px; }
.navhead { height: 44px; display: grid; grid-template-columns: 137px 35px 20px; align-items: center; padding: 0 0 2px 7px; }
.all { font-size: 24.900px; line-height: 34px; }
.drop { width: 16px; height: 16px; margin-bottom: 4px; }
.left { width: 8px; height: 13px; margin-bottom: 4px; }
.search { width: 199px; height: 30px; background: #fff; border: 1px solid #777; display: flex; align-items: center; justify-content: space-between; padding: 0 4px 0 7px; font-size: 12.300px; }
.search svg { width: 20px; height: 20px; }
.sect { width: 199px; height: 34px; display: flex; align-items: center; justify-content: space-between; padding: 0 14px 0 11px; }
.sect svg { width: 11px; height: 7px; margin-bottom: 3px; }
.item { width: 199px; height: 30px; display: flex; align-items: center; gap: 14px; padding-left: 13px; border: 1px solid transparent; margin: -4px 0 -1px; }
.item svg { width: 20px; height: 16px; margin-bottom: 2px; }
.item.sel { background: #fff; border-color: #555; margin: 0; }

.doc { width: 1704px; display: flex; flex-direction: column; }
.doctabs { height: 30px; display: flex; border-bottom: 1px solid #c8c8c8; font-size: 12.600px; }
.dt { display: grid; align-items: center; height: 30px; border-right: 1px solid #c8c8c8; }
.dt span { padding-top: 1px; }
.dt .sh { width: 20px; height: 16px; }
.dt .q { width: 20px; height: 20px; }
.dt.on { width: 126px; background: #fff; border-top: 4px solid #a01a30; grid-template-columns: 30px 67px 12px; padding-left: 7px; padding-bottom: 3px; }
.t2 { width: 121px; grid-template-columns: 29px 63px 12px; padding-left: 7px; }
.t3 { width: 144px; grid-template-columns: 29px 86px 12px; padding-left: 7px; }
.closeall { margin: 9px 9px 0 auto; }

.sheet { height: 682px; font: 16.400px/24px Lato, "Open Sans", sans-serif; background:
  linear-gradient(#dfe2e6, #dfe2e6) 0 0 / 849px 24px no-repeat,
  linear-gradient(#f7f7fe, #f7f7fe) 0 0 / 100% 24px no-repeat,
  linear-gradient(90deg, transparent 22px, #e4e5ee 22px, #e4e5ee 23px, transparent 23px),
  linear-gradient(#f6f6ff, #f6f6ff) 0 0 / 22px 100% no-repeat,
  repeating-linear-gradient(transparent 0 23px, #f4f5f7 23px 24px),
  repeating-linear-gradient(90deg, transparent 0 117px, #f4f5f7 117px 118px) 23px 0,
  #fff; }
.row { display: grid; grid-template-columns: 23px repeat(7, 118px); height: 24px; }
.row > div { border-right: 1px solid #d8d8d8; overflow: hidden; padding: 0 3px; height: 24px; border-bottom: 1px solid #e2e2e2; }
.row .num { text-align: right; padding-right: 1px; }
.row .sel { padding: 0; display: grid; place-items: center; }
.row .sel svg { width: 12px; height: 12px; }
.head > div { display: flex; align-items: center; background: #dfe2e6; border-right-color: #b0b4ba; border-bottom: 0; color: #444; }
.head > .sel { border-right: 0; }
.head span { width: 93px; flex: none; overflow: hidden; text-align: center; letter-spacing: .1px; }
.head > div:nth-child(5) span, .head > div:nth-child(6) span { text-align: left; }
.head i { margin-left: 7px; border: 4px solid transparent; border-top: 4px solid #222; border-width: 4px 3.500px 0; }
.head > .act { background: linear-gradient(#ffd25c, #ffec70); }
.act svg { width: 17px; height: 12px; margin-left: 2px; }
.data > div { background: #a4cef1; color: #000; line-height: 25px; }
.data .sel { background: #ffd65c; }
.data .edit { background: #fff; border: 2px solid #f4a6aa; padding: 0 2px; line-height: 20px; margin-left: -1px; }
mark { background: #000; color: #fff; display: inline-block; height: 20px; line-height: 21px; }
.new > div { background: #f1f1f1; border-right-color: #e4e4e4; border-bottom-color: #ddd; line-height: 25px; }
.new .sel { background: #dfe2e6; }

.recbar { height: 22px; border-top: 1px solid #a8a8b2; border-bottom: 1px solid #b8b8b8; border-right: 1px solid #a8a8b2; background: linear-gradient(#f3f4f6 0 11px, #e4e5ea 11px); display: grid; grid-template-columns: 53px 21px 14px 74px 20px 17px 24px 114px 1fr; align-items: center; padding-left: 5px; font-size: 12.500px; color: #000; overflow: hidden; }
.recbar > svg { width: 8px; height: 9px; }
.recbar > .nw { width: 16px; }
.rl { color: #555; padding-top: 2px; font-size: 12.800px; }
.pos { width: 63px; height: 20px; background: #fff; border: 1px solid #b0b0b0; padding-left: 1px; line-height: 21px; letter-spacing: .4px; }
.filt { height: 20px; background: #ffbfc1; width: 107px; border: 0 solid #aaa; border-width: 0 1px; display: flex; align-items: center; padding-left: 11px; gap: 3px; line-height: 22px; }
.filt svg { width: 20px; height: 20px; }
.find { width: 88px; height: 20px; background: #fff; border: 1px solid #b8b8b8; padding-left: 1px; line-height: 21px; }

.status { height: 26px; background: #f3f3f3; display: grid; grid-template-columns: 1644px 82px 83px 65px 30px; align-items: center; padding-left: 10px; font-size: 12.500px; }
.status > span:not(.view) { padding-top: 1px; }
.view { width: 50px; height: 26px; background: #dcdcdc; display: grid; place-items: center; }

/* taskbar */
.taskbar { height: 60px; background: #f0f0f0; border-top: 1px solid #dedede; display: grid; grid-template-columns: 40px 492px 46px 278px 747px 150px 87px 40px; align-items: center; padding-left: 25px; }
.weather { width: 32px; height: 22px; }
.wtext, .clock { display: flex; flex-direction: column; }
.dim { color: #666; letter-spacing: .1px; }
.start { width: 29px; height: 29px; }
.pill { width: 274px; height: 39px; border-radius: 20px; background: #fbfbfb; border: 1px solid #dcdcdc; display: grid; grid-template-columns: 30px 165px 62px; align-items: center; padding-left: 15px; font-size: 16.200px; color: #666; overflow: hidden; }
.pm { width: 18px; height: 18px; }
.art { width: 61px; height: 27px; align-self: end; }
.apps { display: flex; gap: 7px; padding-left: 3px; }
.app { width: 48px; height: 48px; display: grid; place-items: center; position: relative; border-radius: 5px; }
.app svg { width: 30px; height: 30px; }
.run::after { content: ""; position: absolute; width: 8px; height: 4px; border-radius: 2px; background: #868686; left: 20px; bottom: 0; }
.active { background: #fafafa; box-shadow: 0 0 1px #999; }
.active::after { width: 20px; left: 14px; background: #0b78d4; }
.attn { background: #f6e9ea; }
.attn::after { background: #c42b1c; }
.badge { width: 20px; height: 20px; border-radius: 50%; background: #0078d4; color: #fff; font-size: 12.500px; text-align: center; line-height: 20px; }
.app .badge { position: absolute; left: 25px; top: 3px; }
.app .red { background: #f00; }
.rr { font: 19px "Liberation Serif", serif; }
.aa { font: bold 12px "Open Sans", sans-serif; }
.tray { display: grid; grid-template-columns: 30px 35px 30px 31px 20px; padding-left: 3px; }
.tray svg { width: 20px; height: 20px; }
.clock { align-items: flex-end; }
.note { margin-left: 10px; }
```
